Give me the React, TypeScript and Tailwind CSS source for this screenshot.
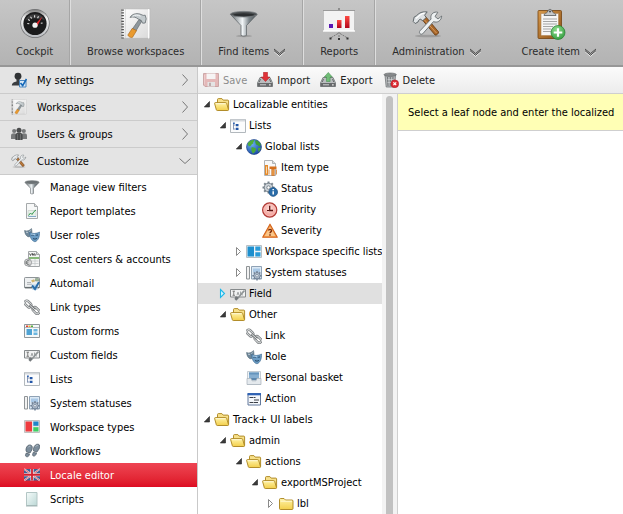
import * as React from "react";
import { clsx } from "clsx";

type IconProps = { className?: string };
type IconType = (props: IconProps) => React.ReactElement;

const Svg = ({
  box = 16,
  className = "h-4 w-4",
  children,
}: {
  box?: number;
  className?: string;
  children: React.ReactNode;
}) => (
  <svg viewBox={`0 0 ${box} ${box}`} className={clsx("shrink-0", className)} fill="none" aria-hidden="true">
    {children}
  </svg>
);

/* ---------- Shared gradients ---------- */

const Gradients = () => (
  <svg className="absolute h-0 w-0" aria-hidden="true">
    <defs>
      <linearGradient id="folder" x1="0" y1="0" x2="0" y2="1">
        <stop offset="0" stopColor="#fff3a8" />
        <stop offset="1" stopColor="#f3cf4b" />
      </linearGradient>
      <linearGradient id="steel" x1="0" y1="0" x2="1" y2="0">
        <stop offset="0" stopColor="#5d6468" />
        <stop offset="0.45" stopColor="#f2f6f8" />
        <stop offset="0.7" stopColor="#7e878c" />
        <stop offset="1" stopColor="#4c5256" />
      </linearGradient>
      <linearGradient id="bezel" x1="0" y1="0" x2="0" y2="1">
        <stop offset="0" stopColor="#777" />
        <stop offset="0.3" stopColor="#f4f4f4" />
        <stop offset="1" stopColor="#b9bcc0" />
      </linearGradient>
      <linearGradient id="page" x1="0" y1="0" x2="1" y2="1">
        <stop offset="0" stopColor="#ffffff" />
        <stop offset="1" stopColor="#d9d9d9" />
      </linearGradient>
      <linearGradient id="barRed" x1="0" y1="0" x2="0" y2="1">
        <stop offset="0" stopColor="#ff4a42" />
        <stop offset="1" stopColor="#b3061b" />
      </linearGradient>
      <linearGradient id="wood" x1="0" y1="0" x2="1" y2="1">
        <stop offset="0" stopColor="#d79a4c" />
        <stop offset="1" stopColor="#8a4e15" />
      </linearGradient>
      <radialGradient id="plus" cx="0.4" cy="0.3" r="0.8">
        <stop offset="0" stopColor="#8fdc8c" />
        <stop offset="1" stopColor="#2f9a3c" />
      </radialGradient>
      <radialGradient id="globe" cx="0.35" cy="0.3" r="0.8">
        <stop offset="0" stopColor="#6cb2f2" />
        <stop offset="1" stopColor="#123f9c" />
      </radialGradient>
      <radialGradient id="clock" cx="0.5" cy="0.4" r="0.6">
        <stop offset="0" stopColor="#ffe3de" />
        <stop offset="1" stopColor="#ef8f88" />
      </radialGradient>
      <linearGradient id="script" x1="0" y1="0" x2="1" y2="1">
        <stop offset="0" stopColor="#f6fcfb" />
        <stop offset="1" stopColor="#bcd8d6" />
      </linearGradient>
    </defs>
  </svg>
);

/* ---------- Header icons ---------- */

const CockpitIcon: IconType = ({ className }) => (
  <Svg box={32} className={className}>
    <circle cx="16" cy="15.500" r="14.600" fill="#6f7072" />
    <circle cx="16" cy="15.300" r="13.900" fill="url(#bezel)" />
    <circle cx="16" cy="15.500" r="11.600" fill="#1b1b1c" />
    <path d="M6 12.500a11 11 0 0 1 20 0c-5-3-15-3-20 0z" fill="#3b3b3c" />
    <g stroke="#e4e4e4" strokeWidth="1.100">
      <path d="M8.300 15.500l2 .3M9 11.600l1.900 1M11.500 8.800l1.200 1.700M15.600 7.200v2.200M19.500 8.200l-.9 2M23.600 15l-1.800.3" />
    </g>
    <path d="M23.600 8.200l-8 8.700 2.600 1.400z" fill="#e2262c" />
    <circle cx="16" cy="17.200" r="2.600" fill="#f3f3f3" />
  </Svg>
);

const HammerPageIcon: IconType = ({ className }) => (
  <Svg box={32} className={className}>
    <path d="M2 .8h28.200v29.600H2z" fill="url(#page)" stroke="#b5b5b5" strokeWidth=".7" />
    <path d="M28.600 1v29.500" stroke="#fff" strokeWidth="1" />
    <path d="M2.600 1.500v29" stroke="#555" strokeWidth="2.600" strokeDasharray="1.200 1.600" />
    <path d="M5.400 1v29" stroke="#c9c9c9" strokeWidth=".6" />
    <path d="M19 11.500l3 1.300-6.400 10.700-3.600-2z" fill="#8e979c" stroke="#5a6266" strokeWidth=".6" />
    <path d="M12.200 20.400l4.400 2.200-4 6.600c-.8 1.200-5-.8-4.600-2.400z" fill="#e99a2f" stroke="#a35f12" strokeWidth=".6" />
    <path
      d="M10 9.400c2-3.400 6.200-4.400 9.800-3.400l3.400 1.400 2-.2 1 3.600-1 4.200-2.600.2-1.400-2.800-3-1.400c-2.200-1.800-5-2.600-8.200-1.600z"
      fill="#c3cacd"
      stroke="#555d61"
      strokeWidth=".7"
    />
    <path d="M12.500 8.400c2.500-1.800 5.500-1.600 8-.2" stroke="#f5f8f9" strokeWidth="1" />
  </Svg>
);

const FunnelIcon: IconType = ({ className }) => (
  <Svg box={32} className={className}>
    <ellipse cx="16" cy="28" rx="8" ry="1.200" fill="#888" opacity=".6" />
    <path d="M2.500 6.500L13 17.500v9.800c1.500 1 4 1 5.500 0v-9.800L29 6.500z" fill="url(#steel)" stroke="#4c5256" strokeWidth=".6" />
    <ellipse cx="15.800" cy="6.200" rx="13.400" ry="2.800" fill="#4d5153" stroke="#787e81" strokeWidth=".8" />
    <ellipse cx="15.800" cy="6.700" rx="10.500" ry="1.500" fill="#2c2f31" />
  </Svg>
);

const ReportsIcon: IconType = ({ className }) => (
  <Svg box={32} className={className}>
    <path d="M16 0v3" stroke="#777" strokeWidth="1.400" />
    <path d="M1 3h30v20H1z" fill="#f3f3f3" />
    <path d="M0 2.500h32" stroke="#9a9a9a" strokeWidth="1" />
    <path d="M0 23h32" stroke="#fff" strokeWidth="1.400" />
    <path d="M6 16h4v4H6z" fill="#5a18b4" />
    <path d="M14 12h4.500v8H14z" fill="url(#barRed)" />
    <path d="M22 8h4.500v12H22z" fill="url(#barRed)" />
    <path d="M16 24v7M15 25.500L7.500 30M17 25.500l7.500 4.500" stroke="#777" strokeWidth="1" strokeDasharray="2 1" />
    <path d="M6.500 29.500h2v2h-2zM15 30h2v2h-2zM23.500 29.500h2v2h-2z" fill="#333" />
  </Svg>
);

const ToolsIcon: IconType = ({ className }) => (
  <Svg box={32} className={className}>
    <ellipse cx="16" cy="28" rx="13" ry="1.300" fill="#777" opacity=".45" />
    <path d="M10 11.500l3.500-3L26.500 23.800c.8 1.300-2.200 4-3.500 3.200z" fill="#a8672a" stroke="#633811" strokeWidth=".8" />
    <path d="M12.500 12l12 13" stroke="#d89a5c" strokeWidth="1" />
    <path
      d="M23 4.200c-3.400.8-4.800 3.900-3.900 6.800L8 22.800c-1.700 2 .7 4.500 2.700 3L21.500 13.600c3.600 1.600 8-.8 8.200-5.600l-3.700 3-3-2.500 2.800-4.200c-.9-.3-1.900-.3-2.800-.1z"
      fill="#eef1f2"
      stroke="#666d71"
      strokeWidth=".9"
    />
    <path
      d="M1.200 13.500l1-4.500c1.500-.5 2.800-1.500 4-2.800 2-1.800 5-2.700 9-2.300L12.600 7.200l1.600 2.300-3.400 3.200-2.600-1.600c-1 .4-1.700 1.400-2.200 2.900L3.200 15.500z"
      fill="#dfe3e5"
      stroke="#555c60"
      strokeWidth=".9"
    />
    <path d="M4 10.500l4-3.400c1.500-1.200 3-1.700 4.500-1.900" stroke="#fff" strokeWidth="1.200" />
  </Svg>
);

const CreateIcon: IconType = ({ className }) => (
  <Svg box={32} className={className}>
    <rect x="3" y="2.500" width="23.500" height="28" rx="1" fill="url(#wood)" stroke="#74420f" strokeWidth=".8" />
    <path d="M6 5.500h17.500v22H6z" fill="#f6f6f6" stroke="#b08350" strokeWidth=".6" />
    <path d="M8 11h14M8 13.500h14M8 16h14M8 18.500h10M8 21h8M8 23.500h8" stroke="#9d9d9d" strokeWidth=".9" />
    <path
      d="M9 7.500c0-2.500 2.500-2 3.500-3.500.5-3.500 4.500-3.500 5 0 1 1.500 3.500 1 3.500 3.500z"
      fill="#c5c8ca"
      stroke="#55595c"
      strokeWidth=".8"
    />
    <circle cx="15" cy="3.500" r="1.100" fill="#555" />
    <circle cx="23" cy="24.500" r="7" fill="url(#plus)" stroke="#23802f" strokeWidth=".7" />
    <path d="M23 20.200v8.600M18.700 24.500h8.600" stroke="#fff" strokeWidth="2.200" />
  </Svg>
);

/* ---------- Small icons ---------- */

const SmallFunnel: IconType = () => (
  <Svg>
    <path d="M1 3.500l5.500 5.700v5.300c1 .6 2 .6 3 0V9.200L15 3.500z" fill="url(#steel)" stroke="#50575a" strokeWidth=".5" />
    <ellipse cx="8" cy="3.200" rx="7" ry="1.700" fill="#6c7275" stroke="#8c9295" strokeWidth=".5" />
  </Svg>
);

const UserCheckIcon: IconType = () => (
  <Svg>
    <circle cx="7" cy="4.200" r="3.400" fill="#2f3234" />
    <path d="M5.500 7h3v2.500c3 .4 4.500 1.500 4.500 4H.8c0-2.500 2-3.600 4.700-4z" fill="#3a3d40" />
    <path d="M8.500 8.500h6.500V15H8.500z" fill="#dbeaf7" stroke="#3b7dbb" strokeWidth=".9" />
    <path d="M9.500 11l2.200 2.600L15.500 7" stroke="#1668b8" strokeWidth="1.700" />
  </Svg>
);

const GroupIcon: IconType = () => (
  <Svg>
    <g fill="#77797a">
      <circle cx="3.200" cy="5" r="2.100" />
      <path d="M0 13V9.500C0 8 1.200 7.200 3 7.200s3 .8 3 2.300V13z" />
      <circle cx="12.800" cy="5" r="2.100" />
      <path d="M10 13V9.500c0-1.500 1.200-2.300 3-2.300s3 .8 3 2.300V13z" />
    </g>
    <circle cx="8" cy="4.200" r="2.500" fill="#4a4c4d" />
    <path d="M4.400 14V9.500C4.400 7.600 6 6.600 8 6.600s3.600 1 3.600 2.900V14z" fill="#4a4c4d" />
    <path d="M6.500 8v6M9.500 8v6" stroke="#8a8c8d" strokeWidth=".5" />
  </Svg>
);

const ReportIcon: IconType = () => (
  <Svg>
    <path d="M2.500.5h8l3 3v12h-11z" fill="#f7f8f8" stroke="#a5a9ab" />
    <path d="M10.500.5v3h3" fill="#ddd" stroke="#a5a9ab" />
    <path d="M4 7.500h8v6H4z" fill="#e6efe9" stroke="#c3ccc6" strokeWidth=".6" />
    <path d="M4.500 12.500L6.500 10l1.500 1.500 2-3L12 7" stroke="#35974d" strokeWidth="1" />
    <path d="M4.500 13.500h7.500" stroke="#6e9cc4" strokeWidth=".8" />
  </Svg>
);

const MasksIcon: IconType = () => (
  <Svg>
    <path d="M.5 3.500c2.500 1 5 .2 7-2 .8 3.500 1 6.500-2.500 8.500C2 9.500.8 6.500.5 3.500z" fill="#6f8799" stroke="#506675" strokeWidth=".5" />
    <path d="M5.500 5.500c3 1.400 7 1.300 10-.5.2 4.500-1 8.500-4.500 9.800C7.500 14 5.800 10 5.500 5.500z" fill="#6b9cc4" stroke="#3a678d" strokeWidth=".6" />
    <path d="M7.500 8.300c.8-.6 1.600-.4 2 .3M12 8.600c.5-.7 1.300-.9 2-.3" stroke="#1d3d5b" strokeWidth="1" />
    <path d="M9 11.500c1.300.8 2.800.8 4-.2" stroke="#1d3d5b" strokeWidth=".9" />
    <path d="M7 6.900c1.600.6 3 .7 4 .6" stroke="#b7d5ee" strokeWidth=".8" />
    <path d="M2.200 5.200l1.600.2M5.500 4.400l1-.7" stroke="#dfe8ee" strokeWidth=".9" />
  </Svg>
);

const CostIcon: IconType = () => (
  <Svg>
    <path d="M4.500.5h8l3 3v12h-11z" fill="#f4f5f5" stroke="#a2a6a8" />
    <path d="M12.500.5v3h3" fill="#d9d9d9" stroke="#a2a6a8" />
    <path d="M5.500 2.500l1 2 1-2M8.500 4.500v-2l1.500 2v-2M10.700 2.500l.8 2" stroke="#333" strokeWidth=".8" />
    <path d="M5 7h10" stroke="#63a34f" strokeWidth="1.500" />
    <path d="M8 10h6.500M8 12.500h6.500M11 8v6.500" stroke="#bfc4c6" strokeWidth=".7" />
    <circle cx="4" cy="11.500" r="3.600" fill="#dcdcdc" stroke="#85898b" strokeWidth=".8" />
    <path d="M5.500 9.800c-2-1-3.300.2-3.300 1.700s1.300 2.700 3.300 1.700M1.500 11h3M1.500 12.200h2.700" stroke="#5d6163" strokeWidth=".7" />
  </Svg>
);

const MailIcon: IconType = () => (
  <Svg>
    <rect x=".5" y="2.500" width="15" height="10.500" rx=".8" fill="#eef0f1" stroke="#8f9598" />
    <path d="M.8 12.500h14.500" stroke="#666d70" strokeWidth="1.200" />
    <path d="M3 7.500h4M3 9.300h5" stroke="#9fa5a8" strokeWidth=".8" />
    <path d="M7 5.500l3-1.200 1.200 2-2.700 1.200z" fill="#d2b56d" />
    <path d="M11.500 3.500h3v2.500h-3z" fill="#9cb69a" stroke="#71866f" strokeWidth=".5" />
    <path d="M7.500 9.500h6V15h-5z" fill="#bcd6ec" />
    <path d="M8 10.500l3 3.500 4-7" stroke="#2b6ea9" strokeWidth="2" />
  </Svg>
);

const LinkIcon: IconType = () => (
  <Svg>
    <g stroke="#6f7375" strokeWidth="2.400">
      <rect x=".2" y="2.900" width="7.500" height="4.200" rx="2.100" transform="rotate(45 4 5)" />
      <rect x="8.300" y="9.300" width="7.500" height="4.200" rx="2.100" transform="rotate(45 12 11.400)" />
    </g>
    <g stroke="#d6d9da" strokeWidth="1.100">
      <rect x=".2" y="2.900" width="7.500" height="4.200" rx="2.100" transform="rotate(45 4 5)" />
      <rect x="8.300" y="9.300" width="7.500" height="4.200" rx="2.100" transform="rotate(45 12 11.400)" />
    </g>
    <path d="M5.500 6l5.500 5" stroke="#6f7375" strokeWidth="2.400" />
    <path d="M5.500 6l5.500 5" stroke="#e4e6e7" strokeWidth="1" />
  </Svg>
);

const FormIcon: IconType = () => (
  <Svg>
    <path d="M.5 1.500h15v13H.5z" fill="#f5f8f9" stroke="#90979b" />
    <path d="M1 4.500h14" stroke="#b4babd" />
    <path d="M2 2.500h2v1.500H2z" fill="#e23e32" />
    <path d="M4.500 2.500h2v1.500h-2z" fill="#e8b130" />
    <path d="M7 2.500h2v1.500H7z" fill="#52ae3e" />
    <path d="M2.500 6h5.500v6H2.500z" fill="#4fa3d4" />
    <path d="M9.500 6h4v2.500h-4zM9.500 9.500h4V12h-4z" fill="#6cb6df" />
  </Svg>
);

const FieldIcon: IconType = () => (
  <Svg>
    <path d="M.5 3.500h15v7.500H.5z" fill="#f1f2f2" stroke="#85898b" />
    <path d="M2.500 5.200h2.500M2.500 9.300h2.500M3.750 5.200v4" stroke="#666" strokeWidth=".8" />
    <path d="M7 9.200l1-3 1 3M10.500 5.500v3.700M13 6c-2 0-2 3 0 3" stroke="#8b8f91" strokeWidth=".8" />
    <path d="M14.500 4.500L8 12" stroke="#8f9496" strokeWidth="1.600" />
    <path d="M5.500 10.200c2 0 3 1 3 2.400L6.300 14.800 4.500 13z" fill="#74797c" />
  </Svg>
);

const ListsIcon: IconType = () => (
  <Svg>
    <path d="M.5 1.500h15v13H.5z" fill="#fbfcfd" stroke="#b2b8bd" />
    <path d="M1 2.500h14" stroke="#d5d9dd" strokeWidth="2" />
    <path d="M3.500 5v6.500M3.500 7h2M3.500 11h2" stroke="#6c7ea3" strokeWidth=".8" />
    <path d="M3 4.500h1.800v1.500H3z" fill="#3465b0" />
    <path d="M5.800 6h2.700v2.200H5.800zM5.800 9.800h2.700V12H5.800z" fill="#2356a8" />
  </Svg>
);

const StatusesIcon: IconType = () => (
  <Svg>
    <path d="M.5 1.500h3v12.500h-3z" fill="#f2f2f2" stroke="#8f9497" />
    <path d="M5.500 1.500h10V14h-10z" fill="#dce9f5" stroke="#8fa2b5" />
    <path d="M7 3.500h7v3.500H7z" fill="#a9c8e6" />
    <g stroke="#75869a" strokeWidth="1.500">
      <path d="M11 6v9.500M6.300 10.700h9.400M7.700 7.400l6.600 6.600M14.300 7.400l-6.600 6.600" />
    </g>
    <circle cx="11" cy="10.700" r="3.200" fill="#b3c0cf" stroke="#62748a" strokeWidth=".8" />
    <circle cx="11" cy="10.700" r="1.300" fill="#eef2f6" stroke="#62748a" strokeWidth=".6" />
  </Svg>
);

const TypesIcon: IconType = () => (
  <Svg>
    <path d="M.5 1.500h15v12H.5z" fill="#e6e6e6" stroke="#c1c1c1" />
    <path d="M1.500 2.500h6.500v10H1.500z" fill="#ef3b3f" />
    <path d="M9.300 2.500h5.200v4.300H9.300z" fill="#1f86c9" />
    <path d="M9.300 8.200h5.200v4.300H9.300z" fill="#3ed062" />
  </Svg>
);

const SpecificIcon: IconType = () => (
  <Svg>
    <path d="M.5 1.500h15v12H.5z" fill="#eef3f6" stroke="#b8bfc4" />
    <path d="M1.500 2.500h6.500v10H1.500z" fill="#1d8fce" />
    <path d="M9.300 2.500h5.200v4.300H9.300zM9.300 8.200h5.200v4.300H9.300z" fill="#2a9bd8" />
  </Svg>
);

const FeetIcon: IconType = () => (
  <Svg>
    <g fill="#7c8d9b" stroke="#4a5863" strokeWidth=".7">
      <path d="M2 6C2.600 3 4.500 1.500 6.500 2s2.200 2.700 1.300 5L6 10 2.600 8.900C2 8 1.800 7 2 6zM2.200 10.100l3.300 1c-.5 2-1.400 3-2.900 2.600C.9 13.300 1.400 11.700 2.200 10.100z" />
      <path d="M9.500 5.500C10.100 2.600 12.200.8 14.200 1.200c2 .4 1.900 3 .7 5L12.800 9.200 9.700 8C9.300 7.200 9.300 6.400 9.500 5.500zM9.400 9.200l3.200 1.100c-.8 2-1.900 3.200-3.300 2.700-1.200-.4-.8-2 .1-3.800z" />
    </g>
    <path d="M4.300 4.300c.6-1 1.400-1.200 2-1M11.800 3.500c.6-1 1.500-1.200 2.100-1" stroke="#c4d0d9" strokeWidth=".8" />
  </Svg>
);

const FlagIcon: IconType = () => (
  <Svg>
    <path d="M0 2h16v11.500H0z" fill="#3e5f94" />
    <path d="M0 2l16 11.500M16 2L0 13.500" stroke="#f1dfe3" strokeWidth="1.800" />
    <path d="M0 2l16 11.500M16 2L0 13.500" stroke="#d8424f" strokeWidth=".7" />
    <path d="M8 2v11.500M0 7.750h16" stroke="#f7eef0" strokeWidth="3.200" />
    <path d="M8 2v11.500M0 7.750h16" stroke="#d3202f" strokeWidth="1.800" />
  </Svg>
);

const ScriptIcon: IconType = () => (
  <Svg>
    <path d="M2.500 1.500h10.500v13H2.500z" fill="url(#script)" stroke="#b3c6c5" />
    <path d="M2 15h11.500" stroke="#8fa6a5" strokeWidth=".8" />
  </Svg>
);

const FolderOpenIcon: IconType = () => (
  <Svg>
    <path
      d="M3.500 10.500V2.500c0-.5.300-.9.900-.9h3.500l1.300 1.500h4.600c.5 0 .8.300.8.800v8.600"
      fill="#f7e08a"
      stroke="#a9821c"
      strokeWidth=".9"
    />
    <path
      d="M.6 6.500c-.1-.5.200-.9.700-.9h10.400c.5 0 .9.300 1 .8l1.800 6.300c.1.500-.2.800-.7.800H3.300c-.5 0-.9-.3-1-.8z"
      fill="url(#folder)"
      stroke="#a9821c"
      strokeWidth=".9"
    />
    <path d="M1.800 6.700h9.700" stroke="#fffbe0" strokeWidth=".9" />
  </Svg>
);

const FolderIcon: IconType = () => (
  <Svg>
    <path
      d="M1.500 12.500v-9c0-.5.300-1 1-1h3.500L7.500 4H14c.6 0 1 .4 1 1v7.500c0 .6-.4 1-1 1H2.500c-.6 0-1-.4-1-1z"
      fill="url(#folder)"
      stroke="#a9821c"
      strokeWidth=".9"
    />
    <path d="M2.500 5.200h11.500" stroke="#fffbe0" strokeWidth=".9" />
  </Svg>
);

const GlobeIcon: IconType = () => (
  <Svg>
    <circle cx="8" cy="8" r="7.500" fill="url(#globe)" stroke="#1a3d80" strokeWidth=".6" />
    <path d="M2 4c1.500-2 4-3.200 6-3 .8 1-.8 1.600-1 2.600.8.800-.2 1.600-1.200 1.600C5 7 4 7.500 3 7.200 2.300 6.500 1.300 5.500 2 4z" fill="#4fae3a" />
    <path d="M9.500 1.200c2.500.5 4.600 2.300 5.400 4.600l-1.400 1.600-1.800-1.200L10 5.500 9.200 3z" fill="#3f9c33" />
    <path d="M5.500 8.500c2-.6 4 .6 4.600 2-.6 2-2 3.500-3.200 4.200C5.700 13 5 11 5.500 8.500zM12 9l2.800-.5c-.2 1.800-1.200 3.500-2.300 4.500z" fill="#49a83a" />
  </Svg>
);

const ItemTypeIcon: IconType = () => (
  <Svg>
    <path d="M2.500.5h8l3 3v12h-11z" fill="#f8f8f8" stroke="#b1b4b6" />
    <path d="M10.500.5v3h3" fill="#ddd" stroke="#b1b4b6" />
    <path d="M3 5h3v10H3z" fill="#e58a2b" />
    <path d="M4 6.500h1v7H4z" fill="#fbd7a7" />
    <path d="M7.500 6.500h7V9h-7z" fill="#d67220" />
    <path d="M9.700 9h2.600v6.500H9.700z" fill="#e99a45" stroke="#c05f15" strokeWidth=".5" />
    <path d="M7 9.500v5M14.500 9.500v5" stroke="#d98a3f" strokeWidth=".9" />
  </Svg>
);

const StatusIcon: IconType = () => (
  <Svg>
    <g stroke="#7b868f" strokeWidth="2">
      <path d="M6.500.5v12M.5 6.500h12M2.200 2.200l8.600 8.600M10.800 2.200l-8.600 8.600" />
    </g>
    <circle cx="6.500" cy="6.500" r="4.300" fill="#cfd5da" stroke="#66717a" strokeWidth=".8" />
    <circle cx="6.500" cy="6.500" r="1.700" fill="#fff" stroke="#66717a" strokeWidth=".8" />
    <circle cx="11.200" cy="11" r="4.400" fill="#2a6ca8" stroke="#174a7c" strokeWidth=".6" />
    <path d="M11.200 10.200v3.400M11.200 8v1.300" stroke="#fff" strokeWidth="1.500" />
  </Svg>
);

const ClockIcon: IconType = () => (
  <Svg>
    <circle cx="7.700" cy="8" r="7.100" fill="url(#clock)" stroke="#b03a35" strokeWidth="1.200" />
    <circle cx="7.700" cy="8" r="5.700" stroke="#f9c6c1" strokeWidth=".7" />
    <path d="M7.700 3.800V8.500H11" stroke="#5e1210" strokeWidth="1.300" />
    <path d="M5 8.500h2" stroke="#5e1210" strokeWidth="1" />
  </Svg>
);

const SeverityIcon: IconType = () => (
  <Svg>
    <path d="M8 1.200l7.300 13H.7z" fill="#f5a04b" stroke="#d3621c" strokeWidth="1.100" strokeLinejoin="round" />
    <path d="M8 3.700l5.300 9.400H2.700z" fill="#fbd3a0" opacity=".75" />
    <path d="M6.500 7.500c.2-1.500 3-1.500 3 .2 0 1.200-1.500 1.200-1.500 2.600M8 11.200v1.500" stroke="#7c2b0b" strokeWidth="1.400" />
  </Svg>
);

const BasketIcon: IconType = () => (
  <Svg>
    <path d="M1.500 1.500h13v13h-13z" fill="#eef3f7" stroke="#c4ccd3" />
    <path d="M3 2.500h10v6H3z" fill="#86aed0" />
    <path d="M3 2.500h10v2H3z" fill="#6594bd" />
    <path d="M5 8h6v2.300H5z" fill="#5d88ae" />
    <path d="M1 8.500h4l1 2.300h4l1-2.300h4v6H1z" fill="#e4e9ed" stroke="#a6b0b9" strokeWidth=".7" />
  </Svg>
);

const ActionIcon: IconType = () => (
  <Svg>
    <path d="M2 2.500h12.500V14H2z" fill="#f4f7fb" stroke="#63799c" />
    <path d="M1.500 3.200h13.500" stroke="#2f62b5" strokeWidth="2.200" />
    <path d="M3.500 6.500h4M3.500 11.500h4" stroke="#3b3f47" strokeWidth="1.100" />
    <path d="M8 9h5M8 6.500h1.500M8 11.500h4" stroke="#3b3f47" strokeWidth="1.100" />
  </Svg>
);

const SaveIcon: IconType = () => (
  <Svg>
    <path d="M.5 1.500h15v13H2l-1.500-1.500z" fill="#d77f7f" stroke="#a55c5c" />
    <path d="M3.500 1.500h9v5.500h-9z" fill="#f7f4f4" />
    <path d="M4.500 10h7.500v4.500H4.500z" fill="#d8d8d8" />
    <path d="M6 10.800h2v3.200H6z" fill="#8c6a6a" />
    <path d="M1.500 3v9.500" stroke="#e6a3a3" />
  </Svg>
);

const DriveShape = () => (
  <>
    <path d="M3 5.500h10l2.500 5.500v3.500H.5V11z" fill="#b9bcbe" stroke="#6a6e70" strokeWidth=".8" />
    <path d="M.8 11h14.400v3.500H.8z" fill="#67696b" />
    <path d="M3 12.800h6" stroke="#cfd1d2" strokeWidth="1" />
    <path d="M12 12.800h1.700" stroke="#e8e8e8" strokeWidth="1.200" />
    <path d="M3.500 7l-1.200 3M12.500 7l1.200 3" stroke="#55585a" strokeWidth=".8" />
  </>
);

const ImportIcon: IconType = () => (
  <Svg>
    <DriveShape />
    <path d="M6.500.3h4V5h2.300L8.500 9.500 4.200 5h2.300z" fill="#e03338" stroke="#ab151c" strokeWidth=".5" />
  </Svg>
);

const ExportIcon: IconType = () => (
  <Svg>
    <DriveShape />
    <path d="M6.500 9.500h3.600V5h2.200L8.300.4 4.200 5h2.300z" fill="#71bd77" stroke="#3f8a48" strokeWidth=".5" />
  </Svg>
);

const TrashIcon: IconType = () => (
  <Svg>
    <path d="M2 3.500h10.500L11.500 15H3.200z" fill="#b4b7b9" stroke="#727678" strokeWidth=".8" />
    <path d="M4.500 5l.5 9M7.300 5v9M10 5l-.5 9" stroke="#717577" strokeWidth="1" />
    <path d="M4.500 7.500h6M4.500 10.500h6" stroke="#dadcdd" strokeWidth=".6" />
    <ellipse cx="7.200" cy="2.700" rx="6.200" ry="1.700" fill="#86898b" stroke="#5f6365" strokeWidth=".6" />
    <circle cx="11.800" cy="11.800" r="3.900" fill="#dd2c33" stroke="#a9151c" strokeWidth=".5" />
    <path d="M10.400 10.400l2.800 2.800M13.200 10.400l-2.800 2.800" stroke="#fff" strokeWidth="1.200" />
  </Svg>
);

/* ---------- Arrows ---------- */

const MenuChevron = () => (
  <svg viewBox="0 0 13 9" className="h-[9px] w-[13px] shrink-0" fill="none" aria-hidden="true">
    <path d="M1 3.500l5.500 4.700L12 3.500" stroke="#f2f2f2" strokeWidth="1" />
    <path d="M1 1l5.500 4.500L12 1" stroke="#3c3c3c" strokeWidth=".9" />
    <path d="M1 2.600l5.500 4.700L12 2.600" stroke="#3c3c3c" strokeWidth=".9" />
  </svg>
);

const RightChevron = () => (
  <svg viewBox="0 0 8 12" className="mx-[2px] h-3 w-2 shrink-0" fill="none" aria-hidden="true">
    <path d="M1.500.5L6.500 6l-5 5.500" stroke="#777" strokeWidth="1" />
  </svg>
);

const DownChevron = () => (
  <svg viewBox="0 0 12 8" className="h-2 w-3 shrink-0" fill="none" aria-hidden="true">
    <path d="M.5 1.500L6 6.500l5.500-5" stroke="#777" strokeWidth="1" />
  </svg>
);

const Expander = ({ state }: { state?: "open" | "closed" | "hover" }) => (
  <svg viewBox="0 0 14 16" className="h-4 w-[14px] shrink-0" fill="none" aria-hidden="true">
    {state === "open" && <path d="M9.500 4.500v5.500H4.300z" fill="#3c3c3c" stroke="#222" strokeWidth=".6" />}
    {state === "closed" && <path d="M4.500 3.500l4 4-4 4z" fill="#fff" stroke="#8a8a8a" strokeWidth="1" />}
    {state === "hover" && <path d="M4.500 3.500l4 4-4 4z" fill="#d8f4fd" stroke="#1cb8ea" strokeWidth="1.100" />}
  </svg>
);

/* ---------- Data ---------- */

const menuItems: { label: string; icon: IconType; menu?: boolean; divider?: boolean }[] = [
  { label: "Cockpit", icon: CockpitIcon, divider: true },
  { label: "Browse workspaces", icon: HammerPageIcon, divider: true },
  { label: "Find items", icon: FunnelIcon, menu: true, divider: true },
  { label: "Reports", icon: ReportsIcon, divider: true },
  { label: "Administration", icon: ToolsIcon, menu: true },
  { label: "Create item", icon: CreateIcon, menu: true },
];

const sections: { label: string; icon: IconType; open?: boolean }[] = [
  { label: "My settings", icon: UserCheckIcon },
  { label: "Workspaces", icon: HammerPageIcon },
  { label: "Users & groups", icon: GroupIcon },
  { label: "Customize", icon: ToolsIcon, open: true },
];

const customizeItems: { label: string; icon: IconType }[] = [
  { label: "Manage view filters", icon: SmallFunnel },
  { label: "Report templates", icon: ReportIcon },
  { label: "User roles", icon: MasksIcon },
  { label: "Cost centers & accounts", icon: CostIcon },
  { label: "Automail", icon: MailIcon },
  { label: "Link types", icon: LinkIcon },
  { label: "Custom forms", icon: FormIcon },
  { label: "Custom fields", icon: FieldIcon },
  { label: "Lists", icon: ListsIcon },
  { label: "System statuses", icon: StatusesIcon },
  { label: "Workspace types", icon: TypesIcon },
  { label: "Workflows", icon: FeetIcon },
  { label: "Locale editor", icon: FlagIcon },
  { label: "Scripts", icon: ScriptIcon },
];

const toolbarItems: { label: string; icon: IconType; disabled?: boolean }[] = [
  { label: "Save", icon: SaveIcon, disabled: true },
  { label: "Import", icon: ImportIcon },
  { label: "Export", icon: ExportIcon },
  { label: "Delete", icon: TrashIcon },
];

const indents = ["pl-[2px]", "pl-[18px]", "pl-[34px]", "pl-[50px]", "pl-[66px]"];

const treeNodes: {
  label: string;
  level: number;
  icon: IconType;
  state?: "open" | "closed" | "hover";
}[] = [
  { label: "Localizable entities", level: 0, icon: FolderOpenIcon, state: "open" },
  { label: "Lists", level: 1, icon: ListsIcon, state: "open" },
  { label: "Global lists", level: 2, icon: GlobeIcon, state: "open" },
  { label: "Item type", level: 3, icon: ItemTypeIcon },
  { label: "Status", level: 3, icon: StatusIcon },
  { label: "Priority", level: 3, icon: ClockIcon },
  { label: "Severity", level: 3, icon: SeverityIcon },
  { label: "Workspace specific lists", level: 2, icon: SpecificIcon, state: "closed" },
  { label: "System statuses", level: 2, icon: StatusesIcon, state: "closed" },
  { label: "Field", level: 1, icon: FieldIcon, state: "hover" },
  { label: "Other", level: 1, icon: FolderOpenIcon, state: "open" },
  { label: "Link", level: 2, icon: LinkIcon },
  { label: "Role", level: 2, icon: MasksIcon },
  { label: "Personal basket", level: 2, icon: BasketIcon },
  { label: "Action", level: 2, icon: ActionIcon },
  { label: "Track+ UI labels", level: 0, icon: FolderOpenIcon, state: "open" },
  { label: "admin", level: 1, icon: FolderOpenIcon, state: "open" },
  { label: "actions", level: 2, icon: FolderOpenIcon, state: "open" },
  { label: "exportMSProject", level: 3, icon: FolderOpenIcon, state: "open" },
  { label: "lbl", level: 4, icon: FolderIcon, state: "closed" },
];

/* ---------- Sections ---------- */

const Header = () => (
  <header className="flex h-[67px] shrink-0 items-stretch border-b-2 border-[#979797] bg-linear-to-b from-[#c6c6c6] to-[#b3b3b3] pr-4">
    {menuItems.map(({ label, icon: Icon, menu, divider }) => (
      <React.Fragment key={label}>
        <button type="button" className="flex shrink-0 items-end gap-1 px-4 pb-[5px] text-[#2b2b2b]">
          <span className="flex flex-col items-center gap-1">
            <Icon className="h-8 w-8" />
            <span className="leading-4 whitespace-nowrap">{label}</span>
          </span>
          {menu && (
            <span className="flex h-4 items-center">
              <MenuChevron />
            </span>
          )}
        </button>
        {divider ? (
          <span className="w-[2px] shrink-0 border-l border-[#a6a6a6] bg-[#dedede]" />
        ) : (
          <span className="w-2 shrink-0" />
        )}
      </React.Fragment>
    ))}
  </header>
);

const Sidebar = () => {
  const [selected, setSelected] = React.useState("Locale editor");

  return (
    <nav className="flex w-[198px] shrink-0 flex-col border-r border-[#c9c9c9] bg-white text-black">
      {sections.map(({ label, icon: Icon, open }) => (
        <button
          key={label}
          type="button"
          aria-expanded={!!open}
          className="flex h-[27px] shrink-0 items-center border-b border-[#cbcbcb] bg-[#e4e4e4] pr-[6px] pl-[11px] text-left"
        >
          <Icon className="h-4 w-4" />
          <span className="ml-[10px] flex-1 pt-[2px]">{label}</span>
          {open ? <DownChevron /> : <RightChevron />}
        </button>
      ))}
      <ul>
        {customizeItems.map(({ label, icon: Icon }) => (
          <li key={label}>
            <button
              type="button"
              onClick={() => setSelected(label)}
              className={clsx(
                "flex h-6 w-full items-center gap-[10px] pl-6 text-left",
                selected === label && "bg-linear-to-b from-[#ee4453] to-[#dd0a22] text-white",
              )}
            >
              <Icon />
              <span className="pt-[2px] whitespace-nowrap">{label}</span>
            </button>
          </li>
        ))}
      </ul>
    </nav>
  );
};

const Toolbar = () => (
  <div className="flex h-[27px] shrink-0 items-center gap-[10px] border-b border-[#cfcfcf] bg-linear-to-b from-[#fbfbfb] to-[#ececec] px-[5px]">
    {toolbarItems.map(({ label, icon: Icon, disabled }) => (
      <button
        key={label}
        type="button"
        disabled={disabled}
        className={clsx("flex items-center gap-1 text-[#222]", disabled && "opacity-50")}
      >
        <Icon />
        <span className="pt-[2px]">{label}</span>
      </button>
    ))}
  </div>
);

const EntityTree = () => (
  <div className="flex w-[200px] shrink-0 overflow-hidden border-r border-[#cfcfcf] bg-white">
    <ul role="tree" className="w-[184px] shrink-0">
      {treeNodes.map(({ label, level, icon: Icon, state }, i) => (
        <li
          key={`${label}-${i}`}
          role="treeitem"
          aria-level={level + 1}
          aria-expanded={state ? state === "open" : undefined}
          className={clsx("flex h-[21px] items-center", indents[level], state === "hover" && "bg-[#e0e0e0]")}
        >
          <Expander state={state} />
          <Icon />
          <span className="ml-[3px] pt-[2px] whitespace-nowrap">{label}</span>
        </li>
      ))}
    </ul>
    {/* Scrollbar */}
    <div className="flex flex-1 flex-col bg-[#f3f3f3] px-1 pt-[2px]">
      <div className="flex-1 rounded-t-full bg-[#c1c1c1]" />
    </div>
  </div>
);

export default function App() {
  return (
    <div className="flex h-screen flex-col overflow-hidden bg-white font-['DejaVu_Sans_Condensed','DejaVu_Sans',sans-serif] text-[11px] text-black">
      <Gradients />
      <Header />
      <div className="flex min-h-0 flex-1">
        <Sidebar />
        <main className="flex min-w-0 flex-1 flex-col">
          <Toolbar />
          <div className="flex min-h-0 flex-1">
            <EntityTree />
            <section className="min-w-0 flex-1">
              <p className="border-b border-[#cfcfcf] bg-[#ffffb5] pt-[11px] pb-[9px] pl-[10px] leading-4 whitespace-nowrap">
                Select a leaf node and enter the localized
              </p>
            </section>
          </div>
        </main>
      </div>
    </div>
  );
}
